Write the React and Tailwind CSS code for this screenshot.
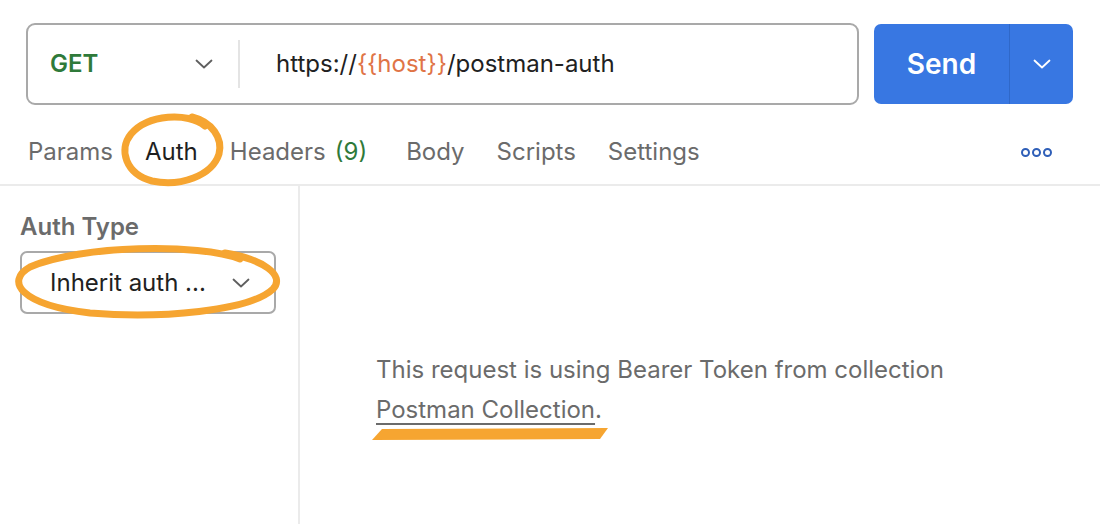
import React from 'react';

const Chevron = ({ className = '', color = '#5f5f5f' }) => (
    <svg className={className} width="18" height="10" viewBox="0 0 18 10" fill="none">
        <path d="M1.5 1.5L9 8.5L16.5 1.5" stroke={color} strokeWidth="1.8" strokeLinecap="round" strokeLinejoin="round" />
    </svg>
);

const tabs = [
    { label: 'Params' },
    { label: 'Auth', active: true },
    { label: 'Headers', count: '(9)' },
    { label: 'Body', extra: true },
    { label: 'Scripts' },
    { label: 'Settings' },
];

function App() {
    return (
        <div
            className="relative w-[1100px] h-[524px] bg-white overflow-hidden text-[#6b6b6b]"
            style={{ fontFamily: 'Inter, "Noto Sans", sans-serif' }}
        >
            {/* request bar */}
            <div className="flex items-center pt-[23px] pl-[26px] pr-[27px] gap-[15px]">
                <div className="flex-1 h-[82px] flex items-center border-2 border-[#a9a9a9] rounded-[9px]">
                    <div className="w-[210px] flex items-center justify-between pl-[22px] pr-[25px]">
                        <span className="text-[24px] font-semibold text-[#2f7a3a]">GET</span>
                        <Chevron />
                    </div>
                    <div className="w-[2px] h-[48px] bg-[#e4e4e4]" />
                    <div className="pl-[36px] text-[24px] text-[#212121]">
                        https://<span className="text-[#e07446]">{'{{host}}'}</span>/postman-auth
                    </div>
                </div>
                <div className="w-[199px] h-[80px] flex rounded-[7px] bg-[#3877e2] text-white">
                    <div className="w-[135px] flex items-center justify-center text-[28px] font-semibold">
                        Send
                    </div>
                    <div className="w-px bg-[#2f68c9]" />
                    <div className="flex-1 flex items-center justify-center">
                        <Chevron color="#ffffff" />
                    </div>
                </div>
            </div>

            {/* tabs */}
            <div className="flex items-center h-[81px] pl-[28px] pr-[48px] border-b-2 border-[#ebebeb]">
                <div className="flex items-center gap-[32px] text-[24px] pt-[15px]">
                    {tabs.map((t) => (
                        <span
                            key={t.label}
                            className={`${t.active ? 'text-[#1f1f1f]' : 'text-[#6b6b6b]'} ${t.extra ? 'ml-[7px]' : ''}`}
                        >
                            {t.label}
                            {t.count && <span className="ml-[9px] text-[#2f7a3a]">{t.count}</span>}
                        </span>
                    ))}
                </div>
                <div className="ml-auto pt-[15px] flex gap-[2px]">
                    <span className="w-[9px] h-[9px] rounded-full border-2 border-[#2f5fb8]" />
                    <span className="w-[9px] h-[9px] rounded-full border-2 border-[#2f5fb8]" />
                    <span className="w-[9px] h-[9px] rounded-full border-2 border-[#2f5fb8]" />
                </div>
            </div>

            {/* body */}
            <div className="flex h-[341px]">
                <div className="w-[300px] border-r-2 border-[#ebebeb] pl-[20px] pt-[25px]">
                    <div className="text-[24px] leading-[32px] font-semibold text-[#6b6b6b]">Auth Type</div>
                    <div className="mt-[8px] w-[256px] h-[63px] flex items-center justify-between border-2 border-[#a9a9a9] rounded-[7px] pl-[28px] pr-[24px]">
                        <span className="text-[24px] text-[#212121]">Inherit auth ...</span>
                        <Chevron />
                    </div>
                </div>
                <div className="flex-1 pl-[76px] pt-[164px] text-[24px] leading-[40px] text-[#6b6b6b]">
                    <div>This request is using Bearer Token from collection</div>
                    <div>
                        <span className="underline underline-offset-[5px] decoration-[1.5px]">Postman Collection</span>.
                    </div>
                </div>
            </div>

            {/* hand-drawn annotations */}
            <svg className="absolute inset-0 pointer-events-none" width="1100" height="524" viewBox="0 0 1100 524" fill="none">
                <path
                    d="M205 126 C 188 112, 148 114, 131 134 C 118 150, 126 174, 152 181 C 180 187, 212 176, 219 154 C 223 138, 212 122, 192 117"
                    stroke="#f6a531"
                    strokeWidth="7"
                    strokeLinecap="round"
                />
                <path
                    d="M240 259 C 200 243, 80 245, 30 267 C 5 281, 20 305, 90 313 C 160 319, 250 311, 273 289 C 286 275, 262 259, 225 253"
                    stroke="#f6a531"
                    strokeWidth="7"
                    strokeLinecap="round"
                />
                <path d="M382 429 L 608 428 L 600 439 L 372 440 Z" fill="#f6a531" />
            </svg>
        </div>
    );
}

export default App;
